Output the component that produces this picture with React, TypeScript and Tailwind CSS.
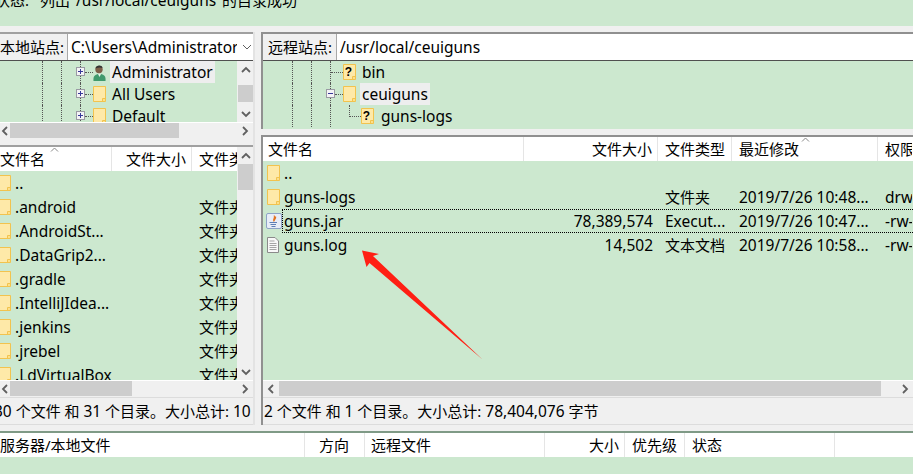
import React from "react";

const L = ({ children }: { children: React.ReactNode }) => <span className="text-[15.5px]">{children}</span>;

const Folder = ({ q }: { q?: boolean }) => (
  <svg width="13" height="16" viewBox="0 0 13 16" className="shrink-0">
    <path d="M0.5 0.5H12.5V15.5H0.5Z" fill="#fde08a" stroke="#f2c34e" />
    <path d="M1 1H12V12H10V15H1Z" fill="#fee9a8" />
    <path d="M9.5 15.5V12.5H12.5" fill="none" stroke="#f2c34e" />
    {q && (
      <text x="5.5" y="12" textAnchor="middle" fontSize="12" fontWeight="700" fontFamily="Liberation Sans" fill="#000">
        ?
      </text>
    )}
  </svg>
);

const JavaIcon = () => (
  <svg width="16" height="16" viewBox="0 0 16 16" className="shrink-0">
    <rect x="0.5" y="0.5" width="15" height="15" rx="1.5" fill="#e8edf7" stroke="#8ea3c6" />
    <path d="M8 2.5C10 5 6.5 5.5 8 8.5C7.5 6.5 10.5 6 9.5 3.5" fill="none" stroke="#e2711d" strokeWidth="1.2" />
    <path d="M3.5 9.5H11M4.5 11.5H10M5.5 13.5H9.5" stroke="#5f7fb5" strokeWidth="1.1" />
  </svg>
);

const TextIcon = () => (
  <svg width="12" height="16" viewBox="0 0 12 16" className="shrink-0">
    <path d="M0.5 0.5H8L11.5 4V15.5H0.5Z" fill="#f8f8f8" stroke="#8a8a8a" />
    <path d="M2.5 4H7.5M2.5 6.5H9.5M2.5 8.5H9.5M2.5 10.5H9.5M2.5 12.5H9.5" stroke="#a5a5a5" />
  </svg>
);

const UserIcon = () => (
  <svg width="13" height="17" viewBox="0 0 13 17" className="shrink-0">
    <path d="M0.5 17C0 12 2 10 6.5 10C11 10 13 12 12.5 17Z" fill="#3f9a6c" />
    <path d="M5 10L6.5 13L8 10Z" fill="#e8f2ea" />
    <circle cx="6" cy="5.5" r="3.7" fill="#7d5f48" />
    <path d="M2.5 4.5C3 1 9 0.5 9.5 4C7 3 5 3.5 2.5 4.5Z" fill="#333" />
  </svg>
);

const Expander = ({ minus }: { minus?: boolean }) => (
  <svg width="9" height="9" viewBox="0 0 9 9" className="shrink-0">
    <rect x="0.5" y="0.5" width="8" height="8" fill="#f4f4f6" stroke="#9a9aa4" />
    <path d={minus ? "M2 4.5H7" : "M2 4.5H7M4.5 2V7"} stroke="#38389a" />
  </svg>
);

type Dir = "up" | "down" | "left" | "right";
const Arrow = ({ d }: { d: Dir }) => {
  const paths: Record<Dir, string> = {
    up: "M1 6L5 2L9 6",
    down: "M1 2L5 6L9 2",
    left: "M6 1L2 5L6 9",
    right: "M2 1L6 5L2 9",
  };
  const vertical = d === "up" || d === "down";
  return (
    <svg viewBox={vertical ? "0 0 10 8" : "0 0 8 10"} className={vertical ? "w-[10px] h-[8px] shrink-0" : "w-[8px] h-[10px] shrink-0"}>
      <path d={paths[d]} fill="none" stroke="#606060" strokeWidth="1.8" />
    </svg>
  );
};

const VScroll = ({ top, thumb }: { top: number; thumb: number }) => (
  <div className="w-[16px] ml-px shrink-0 bg-[#f0f0f0] flex flex-col items-center">
    <div className="h-[17px] flex items-center justify-center shrink-0">
      <Arrow d="up" />
    </div>
    <div className="flex-1 w-full">
      <div className="w-full bg-[#cdcdcd]" style={{ marginTop: top, height: thumb }} />
    </div>
    <div className="h-[17px] flex items-center justify-center shrink-0">
      <Arrow d="down" />
    </div>
  </div>
);

const HScroll = ({ left, width, pad = 0 }: { left: number; width: number; pad?: number }) => (
  <div className="h-[17px] shrink-0 bg-[#f0f0f0] border-t border-white flex items-center" style={{ paddingLeft: pad }}>
    <div className="w-[10px] flex justify-center shrink-0">
      <Arrow d="left" />
    </div>
    <div className="flex-1 h-full">
      <div className="h-[15px] bg-[#cdcdcd]" style={{ marginLeft: left, width }} />
    </div>
    <div className="w-[16px] flex justify-center shrink-0">
      <Arrow d="right" />
    </div>
  </div>
);

const Guide = () => <div className="w-[19px] h-full shrink-0 border-l border-dotted border-[#555]" />;

const Dash = ({ w = "w-[8px]" }: { w?: string }) => <div className={`${w} border-t border-dotted border-[#555] shrink-0`} />;

const Cell = ({ w, right, pr = 5, pl = 7, line = true, children }: { w: number; right?: boolean; pr?: number; pl?: number; line?: boolean; children?: React.ReactNode }) => (
  <div
    className={`shrink-0 h-full flex items-center overflow-hidden whitespace-nowrap ${right ? "justify-end" : ""} ${line ? "border-r border-[#e5e5e5]" : ""}`}
    style={{ width: w, paddingRight: right ? pr : 0, paddingLeft: right ? 0 : pl }}
  >
    {children}
  </div>
);

const leftRows = ["..", ".android", ".AndroidSt...", ".DataGrip2...", ".gradle", ".IntelliJIdea...", ".jenkins", ".jrebel", ".LdVirtualBox"];

const LeftPanel = () => (
  <div className="w-[255px] shrink-0 flex flex-col overflow-hidden border-r-2 border-[#e3e3e3]">
    <div className="h-[107px] shrink-0 flex flex-col border-t-2 border-[#a0a0a0]">
      <div className="h-[27px] shrink-0 flex border-b border-[#505050] bg-white">
        <div className="w-[68px] shrink-0 bg-[#f0f0f0] border-r border-[#a8a8a8] flex items-center whitespace-nowrap">本地站点:</div>
        <div className="flex-1 flex items-center pl-[3px] overflow-hidden">
          <span className="w-[166px] overflow-hidden whitespace-nowrap text-[15.5px]">C:\Users\Administrator</span>
          <svg width="10" height="6" viewBox="0 0 10 6" className="ml-[5px] shrink-0">
            <path d="M1 1L5 5L9 1" fill="none" stroke="#606060" />
          </svg>
        </div>
      </div>
      <div className="flex flex-1 min-h-0">
        <div className="w-[237px] shrink-0 bg-[#cce8cf] pl-[42px] overflow-hidden">
          {[
            { icon: <UserIcon />, label: "Administrator", sel: true },
            { icon: <Folder />, label: "All Users" },
            { icon: <Folder />, label: "Default" },
          ].map((r) => (
            <div key={r.label} className="h-[22px] flex items-center">
              <Guide />
              <Guide />
              <div className="w-[5px] h-full flex items-center shrink-0 relative border-l border-dotted border-[#555]">
                <div className="absolute -left-[5px] top-[6px] flex">
                  <Expander />
                </div>
              </div>
              <Dash w="w-[8px]" />
              <div className="w-[13px] flex justify-center shrink-0">{r.icon}</div>
              <div className={`ml-[4px] h-full flex items-center px-[2px] whitespace-nowrap text-[15.5px] ${r.sel ? "bg-[#eeeeee]" : ""}`}>{r.label}</div>
            </div>
          ))}
        </div>
        <VScroll top={7} thumb={17} />
      </div>
      <HScroll left={0} width={169} />
    </div>
    <div className="h-[6px] shrink-0" />
    <div className="flex-1 min-h-0 flex flex-col border-t-2 border-[#a0a0a0]">
      <div className="flex flex-1 min-h-0">
        <div className="w-[237px] shrink-0 flex flex-col overflow-hidden">
          <div className="h-[24px] shrink-0 bg-white flex relative">
            <Cell w={112} pl={0}>文件名</Cell>
            <Cell w={80} right pr={5}>文件大小</Cell>
            <Cell w={45} line={false}>文件类型</Cell>
            <svg width="9" height="5" viewBox="0 0 9 5" className="absolute left-[50px] top-0">
              <path d="M1 4.5L4.5 1L8 4.5" fill="none" stroke="#888" />
            </svg>
          </div>
          <div className="flex-1 bg-[#cce8cf] overflow-hidden">
            {leftRows.map((r, i) => (
              <div key={r} className="h-[24px] flex items-center whitespace-nowrap">
                <div className="-ml-[2px] w-[17px] shrink-0"><Folder /></div>
                <span className="w-[184px] shrink-0 text-[15.5px]">{r}</span>
                {i > 0 && <span className="w-[38px] overflow-hidden shrink-0">文件夹</span>}
              </div>
            ))}
          </div>
        </div>
        <VScroll top={0} thumb={26} />
      </div>
      <HScroll left={0} width={122} />
      <div className="h-[28px] shrink-0 bg-[#f0f0f0] border-y border-[#dcdcdc] flex items-center whitespace-nowrap overflow-hidden">
        <span className="-ml-[6px]"><L>30</L> 个文件 和 <L>31</L> 个目录。大小总计: <L>10</L></span>
      </div>
    </div>
  </div>
);

const rightRows = [
  { icon: <Folder />, name: "..", size: "", type: "", date: "", perm: "" },
  { icon: <Folder />, name: "guns-logs", size: "", type: "文件夹", date: "2019/7/26 10:48...", perm: "drw" },
  { icon: <JavaIcon />, name: "guns.jar", size: "78,389,574", type: "Execut...", date: "2019/7/26 10:47...", perm: "-rw-", focus: true },
  { icon: <TextIcon />, name: "guns.log", size: "14,502", type: "文本文档", date: "2019/7/26 10:58...", perm: "-rw-" },
];

const RightPanel = () => (
  <div className="flex-1 min-w-0 ml-[6px] flex flex-col overflow-hidden">
    <div className="h-[97px] shrink-0 flex flex-col border-t-2 border-l-2 border-[#909090]">
      <div className="h-[27px] shrink-0 flex border-b border-[#505050] bg-white">
        <div className="w-[74px] shrink-0 bg-[#f0f0f0] border-r border-[#a8a8a8] pl-[5px] flex items-center whitespace-nowrap">远程站点:</div>
        <div className="flex-1 flex items-center pl-[3px] whitespace-nowrap text-[15.5px]">/usr/local/ceuiguns</div>
      </div>
      <div className="flex-1 bg-[#cce8cf] pl-[29px] overflow-hidden">
        <div className="h-[22px] flex items-center">
          <Guide />
          <Guide />
          <div className="border-l border-dotted border-[#555] h-full flex items-center shrink-0">
            <Dash w="w-[12px]" />
          </div>
          <Folder q />
          <div className="ml-[4px] px-[2px] whitespace-nowrap text-[15.5px]">bin</div>
        </div>
        <div className="h-[22px] flex items-center">
          <Guide />
          <Guide />
          <div className="border-l border-dotted border-[#555] h-full flex items-center shrink-0 relative">
            <div className="absolute -left-[5px] top-[6px] flex">
              <Expander minus />
            </div>
            <div className="w-[4px] shrink-0" />
            <Dash w="w-[8px]" />
          </div>
          <Folder />
          <div className="ml-[4px] px-[2px] h-full flex items-center bg-[#eeeeee] whitespace-nowrap text-[15.5px]">ceuiguns</div>
        </div>
        <div className="h-[22px] flex items-center">
          <Guide />
          <Guide />
          <div className="border-l border-dotted border-[#555] h-full shrink-0 w-[19px]" />
          <div className="w-[12px] h-[12px] -mt-[11px] border-l border-b border-dotted border-[#555] shrink-0" />
          <Folder q />
          <div className="ml-[5px] px-[2px] whitespace-nowrap text-[15.5px]">guns-logs</div>
        </div>
      </div>
    </div>
    <div className="h-[6px] shrink-0" />
    <div className="flex-1 min-h-0 flex flex-col border-t-2 border-l-2 border-[#909090]">
      <div className="h-[24px] shrink-0 bg-white flex relative">
        <Cell w={261} pl={5}>文件名</Cell>
        <Cell w={134} right pr={5}>文件大小</Cell>
        <Cell w={74}>文件类型</Cell>
        <Cell w={146}>最近修改</Cell>
        <Cell w={34} line={false}>权限</Cell>
        <svg width="9" height="5" viewBox="0 0 9 5" className="absolute left-[538px] top-0">
          <path d="M1 4.5L4.5 1L8 4.5" fill="none" stroke="#888" />
        </svg>
      </div>
      <div className="flex-1 min-h-0 bg-[#cce8cf] overflow-hidden">
        {rightRows.map((r) => (
          <div key={r.name} className="h-[24px] flex items-center whitespace-nowrap relative">
            {r.focus && <div className="absolute left-[19px] -right-[10px] top-0 h-full border border-dotted border-black" />}
            <div className="w-[21px] shrink-0 pl-[4px] flex items-center">
              <div className={r.focus ? "-ml-[1px] flex" : "flex"}>{r.icon}</div>
            </div>
            <span className="w-[240px] shrink-0 text-[15.5px]">{r.name}</span>
            <span className="w-[134px] shrink-0 text-right pr-[5px] text-[15.5px]">{r.size}</span>
            <span className="w-[74px] shrink-0 pl-[7px]">{r.type === "Execut..." ? <L>{r.type}</L> : r.type}</span>
            <span className="w-[146px] shrink-0 pl-[7px] text-[15.5px]">{r.date}</span>
            <span className="w-[34px] shrink-0 pl-[7px] overflow-hidden text-[15.5px]">{r.perm}</span>
          </div>
        ))}
      </div>
      <HScroll left={3} width={602} pad={3} />
      <div className="h-[28px] shrink-0 bg-[#f0f0f0] border-y border-[#dcdcdc] pl-[1px] flex items-center whitespace-nowrap">
        <span><L>2</L> 个文件 和 <L>1</L> 个目录。大小总计: <L>78,404,076</L> 字节</span>
      </div>
    </div>
  </div>
);

const Queue = () => (
  <div className="h-[26px] shrink-0 flex bg-white border-t-2 border-[#7f9a86]">
    <Cell w={305} pl={0}>服务器/本地文件</Cell>
    <Cell w={60} right pr={15}>方向</Cell>
    <Cell w={180} pl={6}>远程文件</Cell>
    <Cell w={80} right pr={5}>大小</Cell>
    <Cell w={60}>优先级</Cell>
    <Cell w={150}>状态</Cell>
  </div>
);

export default function App() {
  return (
    <div className="w-[913px] h-[474px] relative overflow-hidden flex flex-col bg-[#f0f0f0] text-black text-[15px] leading-[20px] font-['Noto_Sans','Noto_Sans_CJK_SC',sans-serif]">
      <div className="h-[26px] shrink-0 bg-[#cce8cf] overflow-hidden">
        <div className="-mt-[10px] -ml-[5px] flex whitespace-nowrap">
          <span>状态:</span>
          <span className="ml-[11px]">列出</span>
          <span className="ml-[6px] w-[137px] text-[15.5px]">/usr/local/ceuiguns</span>
          <span className="ml-[9px]">的目录成功</span>
        </div>
      </div>
      <div className="h-[6px] shrink-0" />
      <div className="h-[393px] shrink-0 flex">
        <LeftPanel />
        <RightPanel />
      </div>
      <div className="h-[6px] shrink-0" />
      <Queue />
      <div className="flex-1 bg-[#cce8cf]" />
      <svg width="913" height="474" viewBox="0 0 913 474" className="absolute left-0 top-0 pointer-events-none">
        <polygon points="362,250.5 379,254 373,256 482.5,359.5 369.5,263 366.5,267" fill="#ff1f14" />
      </svg>
    </div>
  );
}
